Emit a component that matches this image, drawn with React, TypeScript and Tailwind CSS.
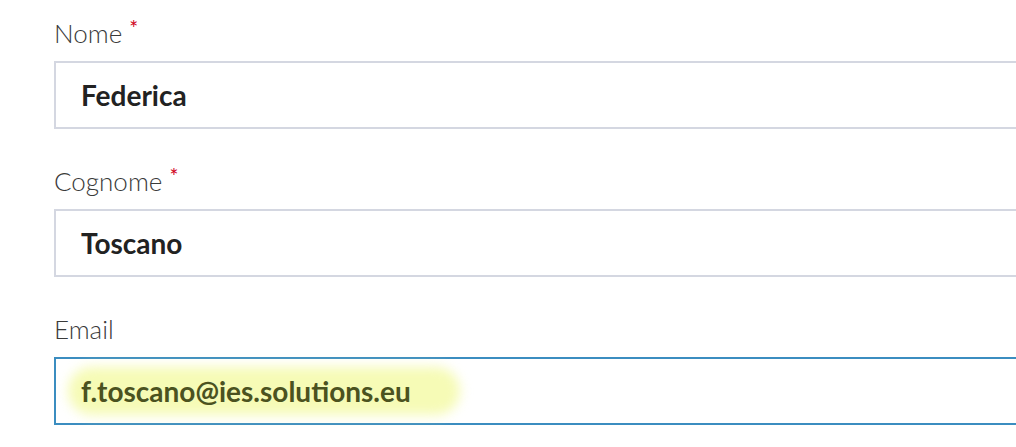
import React from "react";

const fields = [
  { label: "Nome", value: "Federica", required: true, active: false },
  { label: "Cognome", value: "Toscano", required: true, active: false },
  { label: "Email", value: "f.toscano@ies.solutions.eu", required: false, active: true },
];

export default function App() {
  return (
    <div className="w-[1016px] h-[447px] overflow-hidden bg-white font-['Lato',sans-serif]">
      <div className="flex flex-col gap-[35px] pl-[54px] pt-[16px]">
        {fields.map((f) => (
          <div key={f.label} className="flex flex-col gap-[11px]">
            <label className="flex items-start text-[26px] leading-[34px] font-light text-[#3a3a3a]">
              {f.label}
              {f.required && (
                <span className="ml-[7px] mt-[2px] text-[21px] leading-[20px] font-normal text-[#d0021b]">*</span>
              )}
            </label>
            {/* input */}
            <div
              className={
                "relative w-[1000px] h-[68px] flex items-center pl-[25px] border-2 " +
                (f.active ? "border-[#3b8dc0]" : "border-[#d4d7e1]")
              }
            >
              {f.active && (
                <div className="absolute left-[12px] top-[8px] w-[392px] h-[48px] rounded-full bg-[#f6fbb6] blur-[6px]" />
              )}
              <span
                className={
                  "relative text-[28px] font-bold " +
                  (f.active ? "text-[#4b5220]" : "text-[#222]")
                }
              >
                {f.value}
              </span>
            </div>
          </div>
        ))}
      </div>
    </div>
  );
}
